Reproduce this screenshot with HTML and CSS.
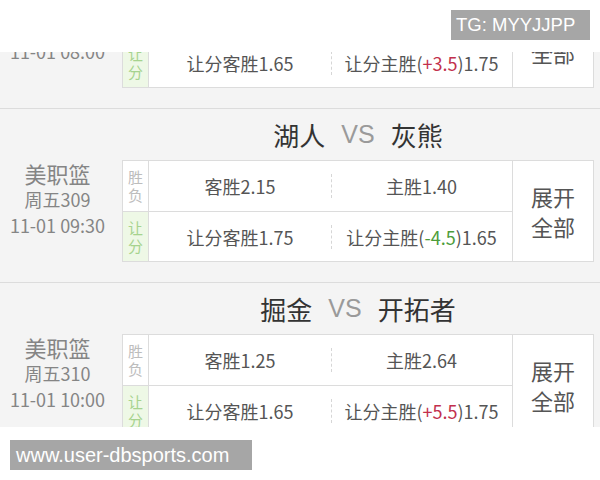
FILE: index.html
```html
<!DOCTYPE html>
<html lang="zh-CN">
<head>
<meta charset="utf-8">
<title>赛事列表</title>
<link rel="stylesheet" href="styles.css">
</head>
<body>
<header class="top">
  <div class="tag">TG: MYYJJPP</div>
</header>
<main class="list">
  <section class="match first">
    <div class="title"></div>
    <div class="body">
      <div class="info partial"><div>11-01 08:00</div></div>
      <div class="odds">
        <div class="label"></div>
        <div class="row top-row"></div>
        <div class="expand partial">全部</div>
        <div class="label green">让<br>分</div>
        <div class="row"><div class="cell">让分客胜1.65</div><div class="cell split">让分主胜(<span class="red">+3.5</span>)1.75</div></div>
      </div>
    </div>
  </section>
  <section class="match">
    <div class="title"><span>湖人</span><span class="vs">VS</span><span>灰熊</span></div>
    <div class="body">
      <div class="info"><div class="league">美职篮</div><div>周五309</div><div>11-01 09:30</div></div>
      <div class="odds">
        <div class="label">胜<br>负</div>
        <div class="row top-row"><div class="cell">客胜2.15</div><div class="cell split">主胜1.40</div></div>
        <div class="expand">展开<br>全部</div>
        <div class="label green">让<br>分</div>
        <div class="row"><div class="cell">让分客胜1.75</div><div class="cell split">让分主胜(<span class="grn">-4.5</span>)1.65</div></div>
      </div>
    </div>
  </section>
  <section class="match">
    <div class="title"><span>掘金</span><span class="vs">VS</span><span>开拓者</span></div>
    <div class="body">
      <div class="info"><div class="league">美职篮</div><div>周五310</div><div>11-01 10:00</div></div>
      <div class="odds">
        <div class="label">胜<br>负</div>
        <div class="row top-row"><div class="cell">客胜1.25</div><div class="cell split">主胜2.64</div></div>
        <div class="expand">展开<br>全部</div>
        <div class="label green">让<br>分</div>
        <div class="row"><div class="cell">让分客胜1.65</div><div class="cell split">让分主胜(<span class="red">+5.5</span>)1.75</div></div>
      </div>
    </div>
  </section>
</main>
<footer class="bottom">
  <div class="url">www.user-dbsports.com</div>
</footer>
</body>
</html>
```
FILE: styles.css
```css
* { box-sizing: border-box; }
html, body { margin: 0; padding: 0; background: #fff; }
body {
  width: 600px;
  height: 480px;
  overflow: hidden;
  font-family: "Noto Sans CJK SC", "Noto Sans", sans-serif;
}
.top {
  height: 52px;
  padding: 10px 10px 0 0;
  display: flex;
  justify-content: flex-end;
}
.tag {
  width: 139px;
  height: 30px;
  background: #a6a6a6;
  color: #fff;
  font-family: "Liberation Sans", Arial, sans-serif;
  font-size: 18.5px;
  line-height: 30px;
  padding-left: 5px;
  white-space: nowrap;
}
.list {
  height: 375px;
  overflow: hidden;
  background: #f4f4f4;
}
.match {
  border-top: 1px solid #dcdcdc;
  padding: 0 6px 20px 0;
}
.match.first { margin-top: -118px; }
.title {
  margin-left: 122px;
  height: 51px;
  display: flex;
  align-items: center;
  justify-content: center;
  font-size: 26px;
  color: #333;
}
.vs {
  color: #9a9a9a;
  font-family: "Liberation Sans", Arial, sans-serif;
  font-size: 25px;
  margin: 0 16px;
}
.body { display: flex; }
.info {
  width: 115px;
  margin-right: 7px;
  text-align: center;
  color: #858585;
  font-size: 18px;
  line-height: 26px;
  white-space: nowrap;
}
.info.partial { padding-top: 52px; }
.league { font-size: 22px; }
.odds {
  flex: 1;
  height: 102px;
  border: 1px solid #dcdcdc;
  background: #fff;
  display: grid;
  grid-template-columns: 26px 1fr 81px;
  grid-template-rows: 51px 49px;
}
.label {
  border-right: 1px solid #dcdcdc;
  font-size: 15px;
  line-height: 18px;
  color: #bdbdbd;
  text-align: center;
  display: flex;
  align-items: center;
  justify-content: center;
}
.label:first-child { border-bottom: 1px solid #dcdcdc; }
.label.green { background: #eef8e6; color: #a6d38e; }
.row {
  display: flex;
  color: #555;
  font-size: 18px;
}
.top-row { border-bottom: 1px solid #dcdcdc; }
.cell {
  flex: 1;
  display: flex;
  align-items: center;
  justify-content: center;
  white-space: nowrap;
}
.cell.split {
  flex: 0 0 181px;
  position: relative;
}
.cell.split::before {
  content: "";
  position: absolute;
  left: 0;
  top: 13px;
  height: 24px;
  border-left: 1px dashed #d6d6d6;
}
.expand {
  grid-column: 3;
  grid-row: 1 / span 2;
  border-left: 1px solid #dcdcdc;
  display: flex;
  align-items: center;
  justify-content: center;
  text-align: center;
  font-size: 22px;
  line-height: 30px;
  color: #555;
}
.expand.partial { padding-top: 30px; }
.red { color: #c2304c; }
.grn { color: #4c9c3a; }
.bottom {
  height: 53px;
  padding: 13px 0 0 10px;
}
.url {
  width: 242px;
  height: 30px;
  background: #a6a6a6;
  color: #fff;
  font-family: "Liberation Sans", Arial, sans-serif;
  font-size: 20px;
  line-height: 30px;
  padding-left: 6px;
  white-space: nowrap;
}
```
